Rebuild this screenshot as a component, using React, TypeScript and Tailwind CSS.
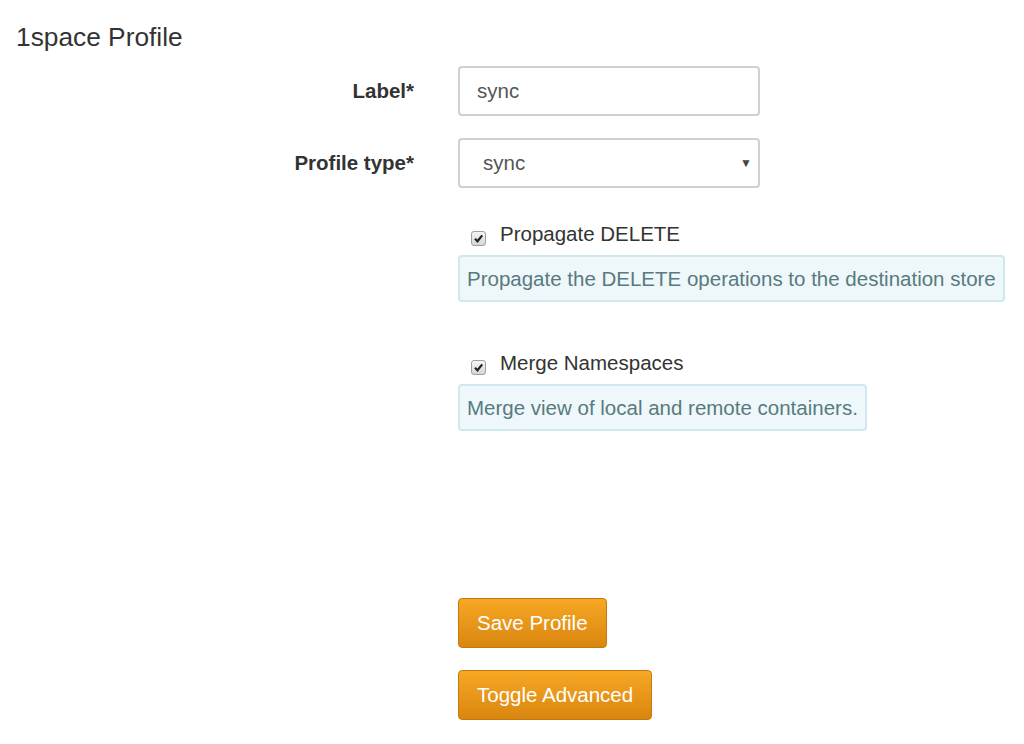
import React from "react";

function Check() {
  return (
    <span className="mt-[10px] flex h-[15px] w-[15px] shrink-0 items-center justify-center rounded-[3px] border border-[#a0a0a0] bg-gradient-to-b from-[#f6f6f6] to-[#d6d6d6]">
      <svg width="11" height="11" viewBox="0 0 11 11">
        <path d="M2 5.8 L4.5 8.3 L9.2 2.4" fill="none" stroke="#222" strokeWidth="2.2" />
      </svg>
    </span>
  );
}

export default function App() {
  return (
    <div className="min-h-[744px] w-[1024px] bg-white font-['Liberation_Sans',Arial,sans-serif] text-[#333]">
      <h1 className="pl-[16px] pt-[22px] text-[26.3px] leading-[30px] text-[#333]">1space Profile</h1>
      <div className="mt-[14px] flex items-center">
        <label className="w-[414px] text-right text-[20.5px] font-bold">Label*</label>
        <div className="ml-[44px] flex h-[50px] w-[302px] items-center rounded-[4px] border-2 border-[#d0d0d0] px-[17px] text-[20.5px] text-[#555]">
          sync
        </div>
      </div>
      <div className="mt-[22px] flex items-center">
        <label className="w-[414px] text-right text-[20.5px] font-bold">Profile type*</label>
        <div className="ml-[44px] flex h-[50px] w-[302px] items-center justify-between rounded-[4px] border-2 border-[#d0d0d0] pl-[23px] pr-[6px] text-[20.5px] text-[#555]">
          <span>sync</span>
          <span className="text-[12px] text-[#444]">▼</span>
        </div>
      </div>
      <div className="ml-[458px] mt-[33px] flex flex-col items-start">
        <div className="flex items-start pl-[13px]">
          <Check />
          <span className="ml-[14px] text-[20.5px] leading-[26px] text-[#333]">Propagate DELETE</span>
        </div>
        <div className="mt-[8px] whitespace-nowrap rounded-[4px] border-2 border-[#cfe7ee] bg-[#eef7f9] px-[7px] py-[8.5px] text-[20.5px] leading-[26px] text-[#587a80]">
          Propagate the DELETE operations to the destination store
        </div>
        <div className="mt-[48px] flex items-start pl-[13px]">
          <Check />
          <span className="ml-[14px] text-[20.5px] leading-[26px] text-[#333]">Merge Namespaces</span>
        </div>
        <div className="mt-[8px] whitespace-nowrap rounded-[4px] border-2 border-[#cfe7ee] bg-[#eef7f9] px-[7px] py-[8.5px] text-[20.5px] leading-[26px] text-[#587a80]">
          Merge view of local and remote containers.
        </div>
        <button className="mt-[167px] h-[50px] rounded-[4px] border border-[#c47a0c] bg-gradient-to-b from-[#f7a823] to-[#d9860f] px-[18px] text-[20.5px] text-white">
          Save Profile
        </button>
        <button className="mt-[22px] h-[50px] rounded-[4px] border border-[#c47a0c] bg-gradient-to-b from-[#f7a823] to-[#d9860f] px-[18px] text-[20.5px] text-white">
          Toggle Advanced
        </button>
      </div>
    </div>
  );
}
